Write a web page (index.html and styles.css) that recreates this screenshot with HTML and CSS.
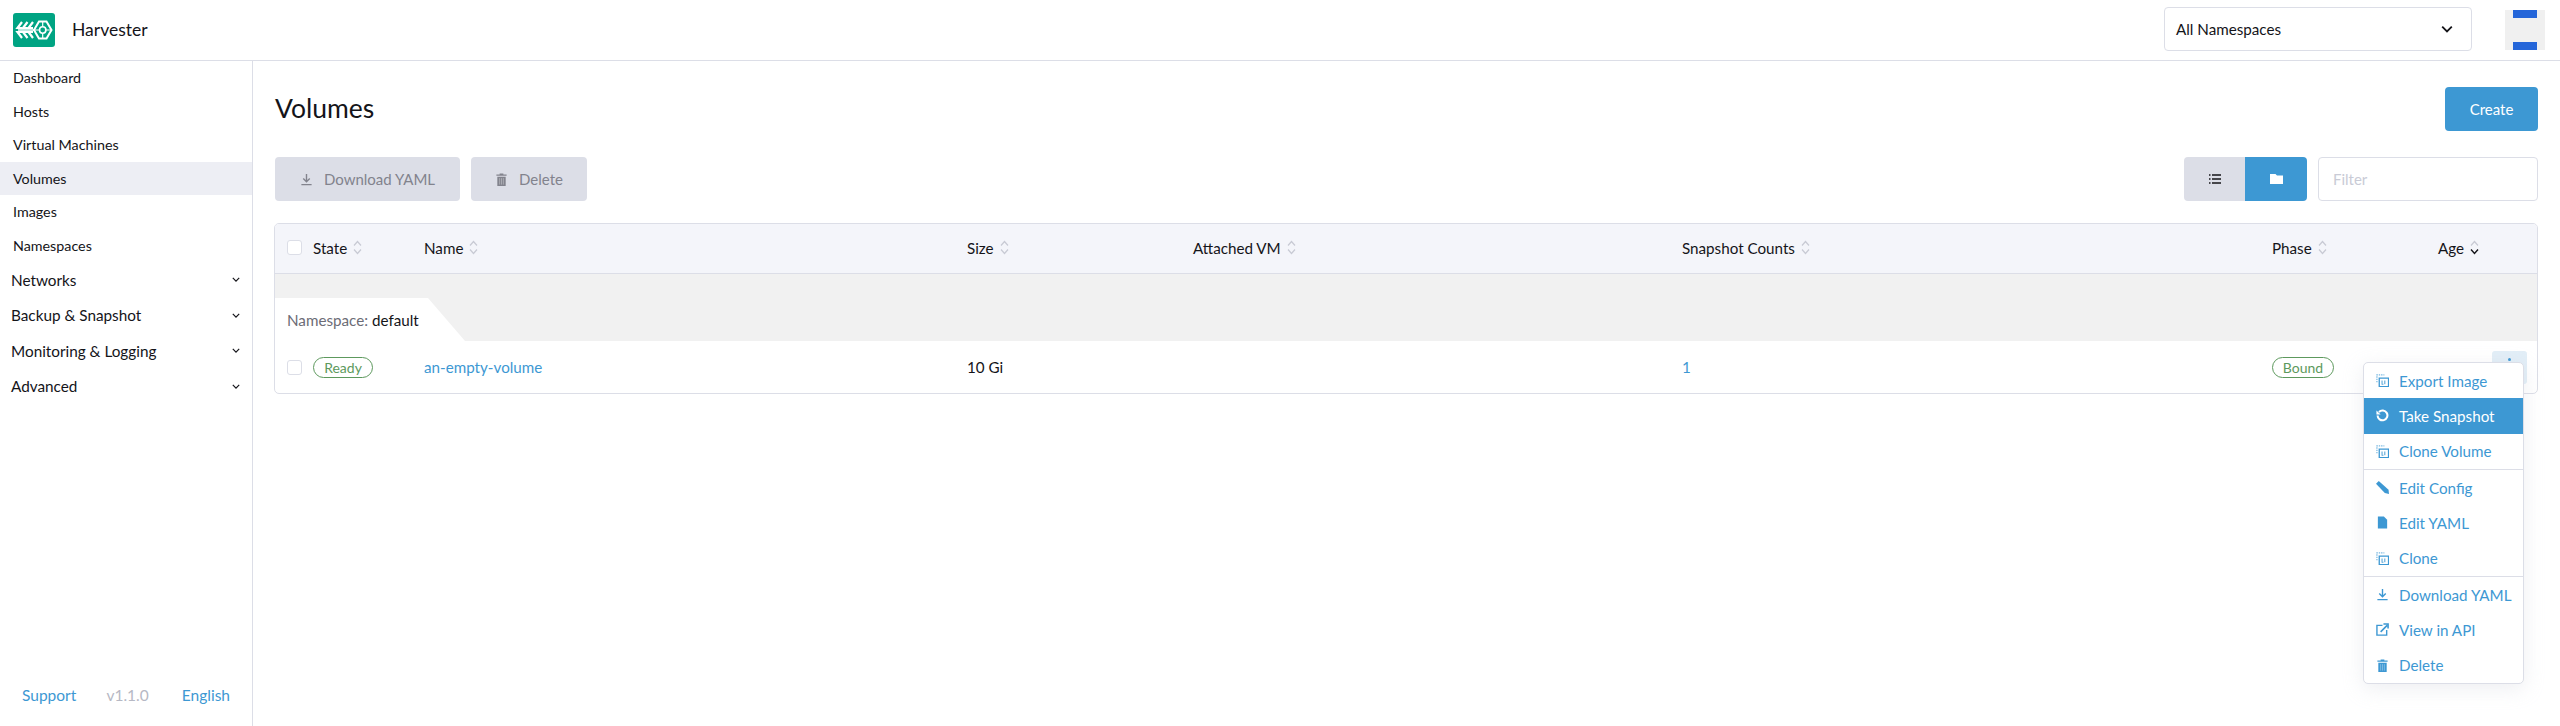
FILE: index.html
```html
<!DOCTYPE html>
<html lang="en">
<head>
<meta charset="utf-8">
<title>Harvester</title>
<link rel="stylesheet" href="styles.css">
</head>
<body>
<svg class="sprite" aria-hidden="true">
  <symbol id="i-dl" viewBox="0 0 14 14"><path d="M7 1v8M3.500 6 7 9.500 10.500 6M1.500 12.500h11" fill="none" stroke="currentColor" stroke-width="1.500"/></symbol>
  <symbol id="i-trash" viewBox="0 0 14 14"><path d="M5 0.500h4v1h3.500v1.500h-11v-1.500H5zM2.500 4h9v10h-9z" fill="currentColor"/><path d="M5 5.500v7M7 5.500v7M9 5.500v7" stroke="#fff" stroke-opacity=".5" stroke-width=".7"/></symbol>
  <symbol id="i-copy" viewBox="0 0 14 14"><path d="M1 9V1h8" fill="none" stroke="currentColor" stroke-opacity=".7" stroke-width="1.300" stroke-dasharray="1.500 1"/><path d="M3.500 4.500h10v9h-10z" fill="none" stroke="currentColor" stroke-width="1.400"/><path d="M6.500 7v3.500M9.500 7v4M6 11h2" stroke="currentColor" stroke-width="1"/></symbol>
  <symbol id="i-snap" viewBox="0 0 14 14"><path d="M3.200 3.200A5.300 5.300 0 1 1 1.700 7" fill="none" stroke="currentColor" stroke-width="2.200"/><path d="M0.500 1.500v4.500H5z" fill="currentColor"/></symbol>
  <symbol id="i-pencil" viewBox="0 0 14 14"><path d="M0 3 3 0l10.500 9.500.5 4.500-4.500-1z" fill="currentColor"/></symbol>
  <symbol id="i-file" viewBox="0 0 14 14"><path d="M2 0.500h6.500L12 4v9.500H2z" fill="currentColor"/></symbol>
  <symbol id="i-ext" viewBox="0 0 14 14"><path d="M7 2.500H1v10.500h10.500V7.500" fill="none" stroke="currentColor" stroke-width="1.500"/><path d="M5 9.500 12 2.500M8 1h5v5" fill="none" stroke="currentColor" stroke-width="1.700"/></symbol>
  <symbol id="i-sort" viewBox="0 0 9 15"><path d="M1 5.500 4.500 1.500 8 5.500" fill="none" stroke="#c8cad4" stroke-width="1.200"/><path d="M1 9.500l3.500 4 3.500-4" fill="none" stroke="#c8cad4" stroke-width="1.200"/></symbol>
  <symbol id="i-sort-down" viewBox="0 0 9 15"><path d="M1 5.500 4.500 1.500 8 5.500" fill="none" stroke="#c8cad4" stroke-width="1.200"/><path d="M1 9.500l3.500 4 3.500-4" fill="none" stroke="#141419" stroke-width="1.400"/></symbol>
  <symbol id="i-chev" viewBox="0 0 10 6"><path d="M1 1l4 4 4-4" fill="none" stroke="currentColor" stroke-width="1.500"/></symbol>
</svg>

<header class="topbar">
  <div class="logo">
    <svg viewBox="0 0 42 34" width="42" height="34">
      <g fill="none" stroke="#fff" stroke-width="2.200">
        <path d="M9 9 4.500 15 9 15M14.500 9 10 15 14.500 15M20 9 15.500 15 20 15"/>
        <path d="M9 25 4.500 19 9 19M14.500 25 10 19 14.500 19M20 25 15.500 19 20 19"/>
        <path d="M5 17h17" stroke-width="1.500"/>
        <path d="M26 8.500h7.500L38.500 17l-5 8.500H26L21 17z" stroke-width="2"/>
      </g>
      <circle cx="29.700" cy="17" r="3.200" fill="none" stroke="#fff" stroke-width="1.600"/>
      <path d="M29.700 9v4.500M29.700 20.500V25M22 17h4.500M33 17h5" stroke="#fff" stroke-width="1.200"/>
    </svg>
  </div>
  <div class="brand">Harvester</div>
  <div class="ns-select">
    <span>All Namespaces</span>
    <svg class="ns-chev"><use href="#i-chev"/></svg>
  </div>
  <div class="avatar"><i class="bar"></i><i class="bar"></i></div>
</header>

<div class="shell">
  <aside class="sidebar">
    <nav class="nav">
      <a class="nav-item">Dashboard</a>
      <a class="nav-item">Hosts</a>
      <a class="nav-item">Virtual Machines</a>
      <a class="nav-item active">Volumes</a>
      <a class="nav-item">Images</a>
      <a class="nav-item">Namespaces</a>
      <a class="nav-group">Networks<svg class="group-chev"><use href="#i-chev"/></svg></a>
      <a class="nav-group">Backup &amp; Snapshot<svg class="group-chev"><use href="#i-chev"/></svg></a>
      <a class="nav-group">Monitoring &amp; Logging<svg class="group-chev"><use href="#i-chev"/></svg></a>
      <a class="nav-group">Advanced<svg class="group-chev"><use href="#i-chev"/></svg></a>
    </nav>
    <footer class="side-foot">
      <a class="link">Support</a>
      <span class="version">v1.1.0</span>
      <a class="link">English</a>
    </footer>
  </aside>

  <main class="main">
    <div class="title-row">
      <h1 class="title">Volumes</h1>
      <button class="btn primary create">Create</button>
    </div>

    <div class="actions">
      <button class="btn disabled dl"><svg class="ico"><use href="#i-dl"/></svg>Download YAML</button>
      <button class="btn disabled del"><svg class="ico"><use href="#i-trash"/></svg>Delete</button>
      <div class="toggle">
        <span class="tg">
          <svg viewBox="0 0 12 10" width="12" height="10"><path d="M0 1h1.500M0 5h1.500M0 9h1.500M3 1h9M3 5h9M3 9h9" stroke="#141419" stroke-width="1.400"/></svg>
        </span>
        <span class="tg on">
          <svg viewBox="0 0 13 10" width="13" height="10"><path d="M0 0h5.500l1.500 1.500h6V10H0z" fill="#fff"/></svg>
        </span>
      </div>
      <div class="filter">Filter</div>
    </div>

    <div class="table">
      <div class="thead cols">
        <span class="cell"><i class="check"></i></span>
        <span class="th">State<svg class="sort"><use href="#i-sort"/></svg></span>
        <span class="th">Name<svg class="sort"><use href="#i-sort"/></svg></span>
        <span class="th">Size<svg class="sort"><use href="#i-sort"/></svg></span>
        <span class="th">Attached VM<svg class="sort"><use href="#i-sort"/></svg></span>
        <span class="th">Snapshot Counts<svg class="sort"><use href="#i-sort"/></svg></span>
        <span class="th">Phase<svg class="sort"><use href="#i-sort"/></svg></span>
        <span class="th">Age<svg class="sort"><use href="#i-sort-down"/></svg></span>
      </div>
      <div class="group-band">
        <div class="group-tab"><span class="muted">Namespace:</span> default</div>
      </div>
      <div class="row cols">
        <span class="cell"><i class="check"></i></span>
        <span class="td"><span class="badge ready">Ready</span></span>
        <span class="td"><a class="link">an-empty-volume</a></span>
        <span class="td">10 Gi</span>
        <span class="td"></span>
        <span class="td"><a class="link">1</a></span>
        <span class="td"><span class="badge bound">Bound</span></span>
        <span class="td"></span>
      </div>
      <div class="row-action"><i class="dot"></i></div>
      <div class="menu">
        <div class="mi"><svg class="mi-ico"><use href="#i-copy"/></svg>Export Image</div>
        <div class="mi hot"><svg class="mi-ico"><use href="#i-snap"/></svg>Take Snapshot</div>
        <div class="mi"><svg class="mi-ico"><use href="#i-copy"/></svg>Clone Volume</div>
        <div class="sep"></div>
        <div class="mi"><svg class="mi-ico"><use href="#i-pencil"/></svg>Edit Config</div>
        <div class="mi"><svg class="mi-ico"><use href="#i-file"/></svg>Edit YAML</div>
        <div class="mi"><svg class="mi-ico"><use href="#i-copy"/></svg>Clone</div>
        <div class="sep"></div>
        <div class="mi"><svg class="mi-ico"><use href="#i-dl"/></svg>Download YAML</div>
        <div class="mi"><svg class="mi-ico"><use href="#i-ext"/></svg>View in API</div>
        <div class="mi"><svg class="mi-ico"><use href="#i-trash"/></svg>Delete</div>
      </div>
    </div>
  </main>
</div>
</body>
</html>
```
FILE: styles.css
```css
* { box-sizing: border-box; }
html, body { height: 100%; }
body {
  margin: 0;
  height: 726px;
  overflow: hidden;
  display: flex;
  flex-direction: column;
  background: #fff;
  color: #141419;
  font-family: Lato, "Liberation Sans", sans-serif;
  font-size: 14px;
}
.sprite { display: none; }
.topbar {
  height: 61px;
  flex: none;
  display: flex;
  align-items: center;
  border-bottom: 1px solid #dcdee7;
  padding: 0 15px 0 13px;
}
.logo { width: 42px; height: 34px; background: #00a483; border-radius: 3px; display: flex; }
.brand { margin-left: 17px; font-size: 17.500px; padding-bottom: 1px; }
.ns-select {
  margin-left: auto;
  margin-bottom: 2px;
  width: 308px;
  height: 44px;
  border: 1px solid #dcdee7;
  border-radius: 4px;
  display: flex;
  align-items: center;
  justify-content: space-between;
  padding: 0 18px 0 11px;
  font-size: 15.200px;
}
.ns-chev { width: 12px; height: 8px; }
.avatar {
  margin-left: 33px;
  width: 40px;
  height: 40px;
  background: #f0f0f0;
  display: flex;
  flex-direction: column;
  justify-content: space-between;
  align-items: center;
}
.bar { display: block; width: 24px; height: 8px; background: #2566d9; }
.shell { flex: 1; display: flex; min-height: 0; }
.sidebar {
  width: 253px;
  flex: none;
  border-right: 1px solid #dcdee7;
  display: flex;
  flex-direction: column;
}
.nav { display: flex; flex-direction: column; }
.nav-item {
  height: 33.500px;
  display: flex;
  align-items: center;
  padding-left: 13px;
  font-size: 14.300px;
}
.nav-item.active { background: #edeef4; }
.nav-group {
  height: 35.500px;
  display: flex;
  align-items: center;
  justify-content: space-between;
  padding: 0 12px 0 11px;
  font-size: 15.300px;
}
.group-chev { width: 8px; height: 5px; }
.side-foot {
  margin-top: auto;
  height: 62px;
  display: flex;
  align-items: center;
  justify-content: space-between;
  padding: 0 22px;
  font-size: 15.500px;
}
.link { color: #3d98d3; }
.version { color: #b6b8c4; margin-left: -3px; }
.main { flex: 1; min-width: 0; padding: 26px 22px 0; }
.title-row { display: flex; justify-content: space-between; align-items: center; height: 44px; }
.title { margin: 0 0 2px; font-size: 26.500px; font-weight: 400; }
.btn {
  height: 44px;
  border: 0;
  border-radius: 4px;
  font: inherit;
  font-size: 15px;
  display: inline-flex;
  align-items: center;
  justify-content: center;
  padding: 0;
}
.primary { background: #3d98d3; color: #fff; }
.create { width: 93px; padding-bottom: 1px; }
.actions { display: flex; align-items: center; margin-top: 26px; }
.disabled { background: #dcdee7; color: #82838d; gap: 11px; }
.dl { width: 185px; }
.del { width: 116px; margin-left: 11px; }
.ico { width: 13px; height: 13px; }
.toggle { margin-left: auto; display: flex; border-radius: 4px; overflow: hidden; }
.tg { width: 61px; height: 44px; display: flex; align-items: center; justify-content: center; background: #dcdee7; }
.tg.on { background: #3d98d3; width: 62px; }
.filter {
  margin-left: 11px;
  width: 220px;
  height: 44px;
  border: 1px solid #dcdee7;
  border-radius: 4px;
  display: flex;
  align-items: center;
  padding: 0 0 1px 14px;
  color: #c9cbd6;
  font-size: 15px;
}
.table {
  position: relative;
  margin-top: 22px;
  height: 171px;
  border: 1px solid #dcdee7;
  border-radius: 5px;
  margin-left: -1px;
}
.cols {
  display: grid;
  grid-template-columns: 38px 111px 543px 226px 489px 590px 166px 99px;
  align-items: center;
}
.thead {
  height: 50px;
  background: #f4f5fa;
  border-bottom: 1px solid #dcdee7;
  border-radius: 4px 4px 0 0;
  padding-bottom: 2px;
}
.cell { padding-left: 12px; display: flex; }
.check { display: block; width: 15px; height: 15px; border: 1px solid #dcdee7; border-radius: 3px; background: #fff; }
.th { display: flex; align-items: center; gap: 6px; font-size: 15.200px; }
.sort { width: 9px; height: 15px; }
.group-band { height: 67px; background: #f1f1f1; padding-top: 24px; }
.group-tab {
  width: 190px;
  height: 43px;
  background: #fff;
  clip-path: polygon(0 0, 153px 0, 100% 100%, 0 100%);
  display: flex;
  align-items: center;
  gap: 4px;
  padding-left: 12px;
  font-size: 15.200px;
}
.muted { color: #6c6c76; }
.row { height: 52px; font-size: 15.200px; }
.badge {
  display: inline-flex;
  align-items: center;
  justify-content: center;
  height: 21px;
  border: 1px solid #5d995d;
  border-radius: 11px;
  color: #5d995d;
  font-size: 14px;
}
.ready { width: 60px; }
.bound { width: 62px; }
.row-action {
  position: absolute;
  right: 10px;
  top: 127px;
  width: 35px;
  height: 33px;
  background: #e2eef7;
  border-radius: 3px;
  display: flex;
  justify-content: center;
  padding-top: 7px;
}
.dot { width: 3px; height: 3px; border-radius: 50%; background: #3d98d3; }
.menu {
  position: absolute;
  left: 2088px;
  top: 138px;
  width: 161px;
  height: 322px;
  background: #fff;
  border: 1px solid #dcdee7;
  border-radius: 5px;
  box-shadow: 0 5px 20px #c8cad44d;
  z-index: 2;
  color: #3d98d3;
  font-size: 15.200px;
}
.mi { height: 35.330px; display: flex; align-items: center; padding-left: 12px; gap: 10px; }
.mi.hot { background: #3d98d3; color: #fff; }
.mi-ico { width: 13px; height: 13px; flex: none; }
.sep { height: 1px; background: #dcdee7; }
```
